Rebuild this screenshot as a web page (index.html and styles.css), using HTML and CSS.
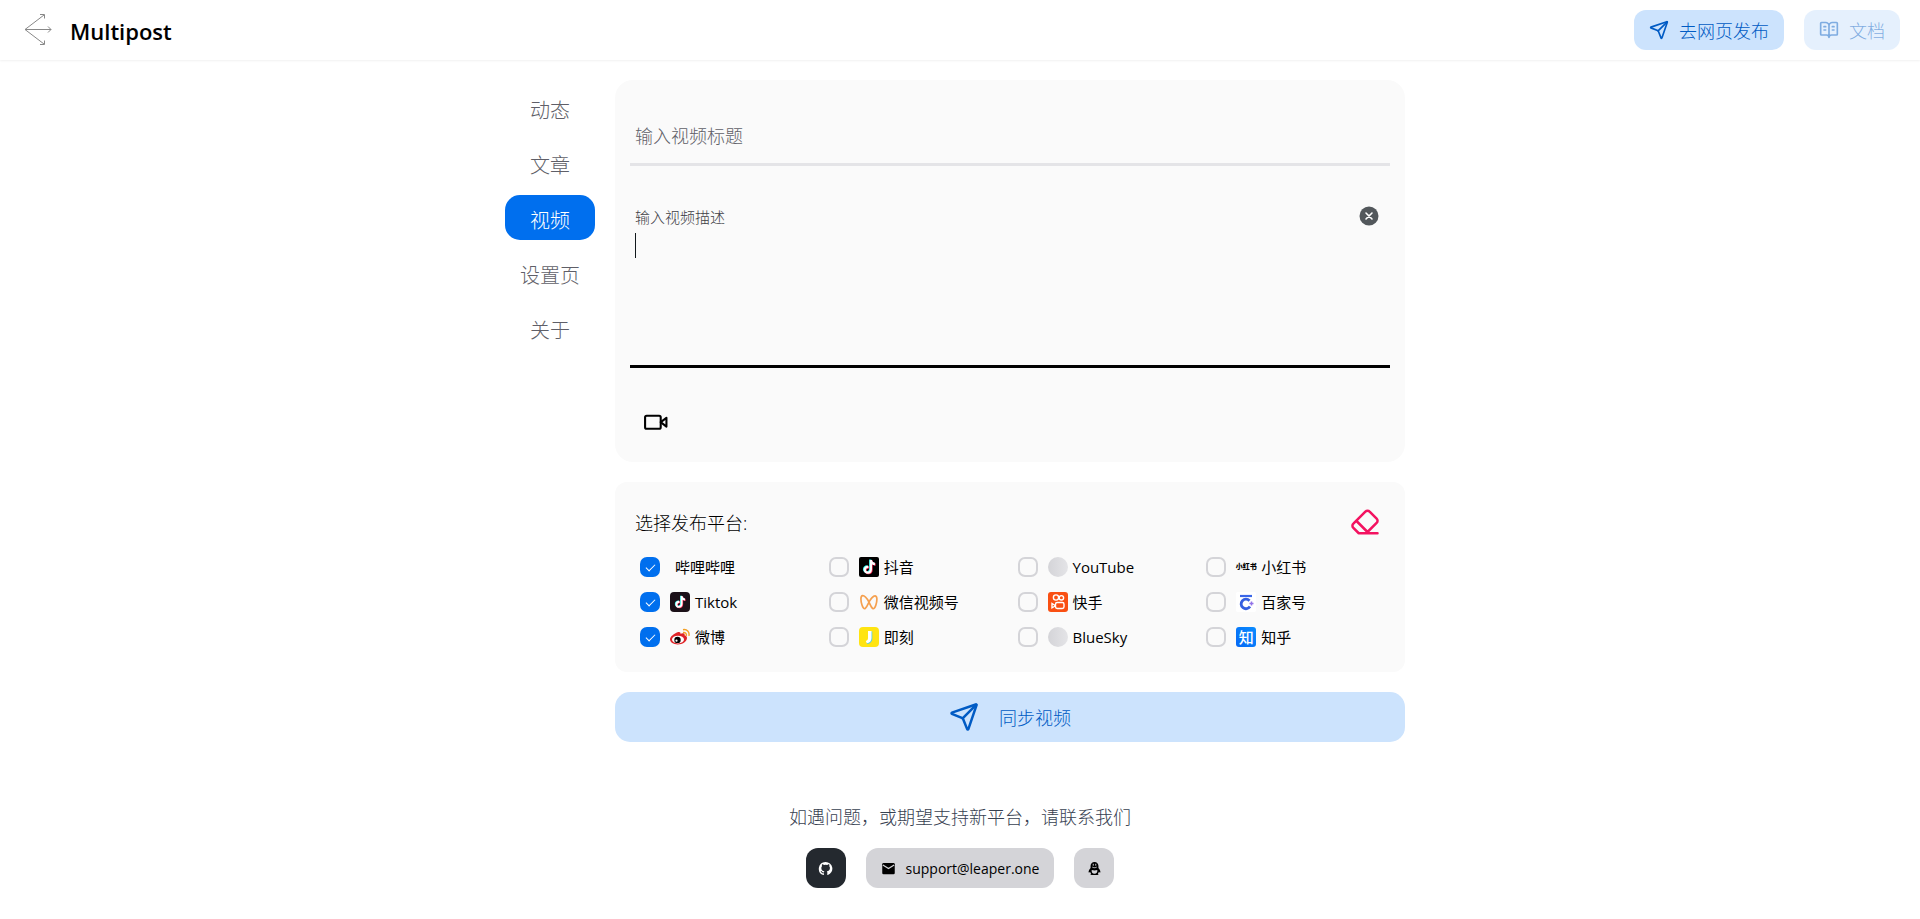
FILE: index.html
```html
<!DOCTYPE html>
<html lang="zh-CN">
<head>
    <meta charset="UTF-8">
    <meta name="viewport" content="width=device-width, initial-scale=1.0">
    <title>Multipost</title>
    <link rel="stylesheet" href="styles.css">
</head>
<body>
    <!-- Shared symbols -->
    <svg class="symbols" aria-hidden="true">
        <symbol id="icon-send" viewBox="0 0 24 24">
            <path d="M14.536 21.686a.5.5 0 0 0 .937-.024l6.5-19a.496.496 0 0 0-.635-.635l-19 6.5a.5.5 0 0 0-.024.937l7.93 3.18a2 2 0 0 1 1.112 1.11z"/>
            <path d="m21.854 2.147-10.94 10.939"/>
        </symbol>
        <symbol id="icon-note" viewBox="0 0 20 20">
            <path d="M10.800 3h2.200c.2 1.700 1.300 2.700 2.900 2.800v2.400c-1.100 0-2.100-.3-2.900-.9v4.900c0 2.900-1.800 4.600-4.200 4.600s-4.200-1.700-4.200-4c0-2.600 2-4.400 4.700-4.100v2.400c-1.300-.3-2.400.5-2.400 1.700 0 1.100.8 1.800 1.800 1.800 1.200 0 2.100-.8 2.100-2.300z"/>
        </symbol>
    </svg>

    <header class="header">
        <div class="brand">
            <svg class="logo" viewBox="0 0 32 34" aria-hidden="true">
                <path d="M2 16.500 21 2M2 16.500h26M2 16.500 21 31M17 1.500h4.500v4M25 13.500l3 3-3 3M21.500 27.500v4H17"/>
            </svg>
            <h1>Multipost</h1>
        </div>
        <div class="header-actions">
            <button type="button" class="btn btn-primary">
                <svg class="icon" aria-hidden="true"><use href="#icon-send"/></svg>
                去网页发布
            </button>
            <button type="button" class="btn btn-primary" disabled>
                <svg class="icon" viewBox="0 0 24 24" aria-hidden="true">
                    <path d="M12 21V7M16 12h2M16 8h2M6 12h2M6 8h2M3 18a1 1 0 0 1-1-1V4a1 1 0 0 1 1-1h5a4 4 0 0 1 4 4 4 4 0 0 1 4-4h5a1 1 0 0 1 1 1v13a1 1 0 0 1-1 1h-6a3 3 0 0 0-3 3 3 3 0 0 0-3-3z"/>
                </svg>
                文档
            </button>
        </div>
    </header>

    <main class="container">
        <nav class="tabs">
            <button type="button" class="tab">动态</button>
            <button type="button" class="tab">文章</button>
            <button type="button" class="tab active">视频</button>
            <button type="button" class="tab">设置页</button>
            <button type="button" class="tab">关于</button>
        </nav>

        <div class="panel">
            <!-- Video form -->
            <section class="card editor">
                <input type="text" class="title-input" placeholder="输入视频标题" aria-label="输入视频标题">
                <div class="field">
                    <div class="field-head">
                        <label for="description">输入视频描述</label>
                        <button type="button" class="clear-btn" aria-label="清除">
                            <svg viewBox="0 0 20 20" aria-hidden="true">
                                <circle cx="10" cy="10" r="9.500" fill="#52575b"/>
                                <path d="m7 7 6 6M13 7l-6 6" stroke="#fff" stroke-width="1.600" stroke-linecap="round"/>
                            </svg>
                        </button>
                    </div>
                    <div class="field-body">
                        <textarea id="description"></textarea>
                        <span class="caret"></span>
                    </div>
                </div>
                <button type="button" class="video-btn" aria-label="添加视频">
                    <svg class="icon-video" viewBox="0 0 24 24" aria-hidden="true">
                        <rect x="2" y="5.500" width="15" height="12.500" rx="1.500"/>
                        <path d="m22.500 7.500-5.500 4.200 5.500 4.200z"/>
                    </svg>
                </button>
            </section>

            <!-- Platforms -->
            <section class="card platforms">
                <div class="platforms-head">
                    <h2>选择发布平台:</h2>
                    <button type="button" class="erase-btn" aria-label="清空">
                        <svg class="icon-lg" viewBox="0 0 24 24" aria-hidden="true">
                            <path d="m7 21-4.300-4.300c-1-1-1-2.500 0-3.400l9.600-9.600c1-1 2.500-1 3.400 0l5.600 5.600c1 1 1 2.500 0 3.400L13 21M22 21H7M5 11l9 9"/>
                        </svg>
                    </button>
                </div>
                <div class="platform-grid">
                    <label class="platform">
                        <input type="checkbox" checked>
                        <span class="platform-name indent">哔哩哔哩</span>
                    </label>
                    <label class="platform">
                        <input type="checkbox">
                        <span class="platform-name">
                            <svg viewBox="0 0 20 20" aria-hidden="true">
                                <rect width="20" height="20" rx="2"/>
                                <use href="#icon-note" x="-.7" y="-.5" fill="#25f4ee"/>
                                <use href="#icon-note" x=".7" y=".5" fill="#fe2c55"/>
                                <use href="#icon-note" fill="#fff"/>
                            </svg>
                            抖音
                        </span>
                    </label>
                    <label class="platform">
                        <input type="checkbox">
                        <span class="platform-name latin"><i class="avatar"></i>YouTube</span>
                    </label>
                    <label class="platform">
                        <input type="checkbox">
                        <span class="platform-name"><i class="red-note" aria-hidden="true">小红书</i>小红书</span>
                    </label>

                    <label class="platform">
                        <input type="checkbox" checked>
                        <span class="platform-name latin">
                            <svg viewBox="0 0 20 20" aria-hidden="true">
                                <rect width="20" height="20" rx="4" fill="#1b1018"/>
                                <g transform="translate(1.500 1.500) scale(.85)">
                                    <use href="#icon-note" x="-.7" y="-.5" fill="#25f4ee"/>
                                    <use href="#icon-note" x=".7" y=".5" fill="#fe2c55"/>
                                    <use href="#icon-note" fill="#fff"/>
                                </g>
                            </svg>
                            Tiktok
                        </span>
                    </label>
                    <label class="platform">
                        <input type="checkbox">
                        <span class="platform-name">
                            <svg viewBox="0 0 20 20" aria-hidden="true">
                                <path d="M10 10C8 6.500 5.500 3.500 3.600 3.700 1.200 4 1.700 9 3 13c.8 2.500 2 4.200 3.200 3.500C7.800 15.500 8.800 12.500 10 10c1.200-2.500 4.300-6.500 6.200-6.200 2.400.4 1.900 5.200.7 9.200-.8 2.500-2 4.200-3.200 3.500C12.200 15.500 11.200 12.500 10 10z" fill="none" stroke="#f5a04f" stroke-width="1.700"/>
                            </svg>
                            微信视频号
                        </span>
                    </label>
                    <label class="platform">
                        <input type="checkbox">
                        <span class="platform-name">
                            <svg viewBox="0 0 20 20" aria-hidden="true">
                                <rect width="20" height="20" rx="3" fill="#f94f12"/>
                                <g fill="none" stroke="#fff" stroke-width="1.400">
                                    <circle cx="8" cy="5.500" r="2.600"/>
                                    <circle cx="13.400" cy="5.800" r="2.200"/>
                                    <rect x="7.500" y="10.500" width="8.500" height="6" rx="1.700"/>
                                    <path d="m7.200 13.500-3.200-2v4.300l3.200-1.800"/>
                                </g>
                            </svg>
                            快手
                        </span>
                    </label>
                    <label class="platform">
                        <input type="checkbox">
                        <span class="platform-name">
                            <svg viewBox="0 0 20 20" aria-hidden="true">
                                <rect width="20" height="20" rx="2" fill="#fff"/>
                                <path d="M4 4h12" stroke="#3a66e8" stroke-width="2.200"/>
                                <path d="M13.500 8.700A4.800 4.800 0 1 0 14 14.500" fill="none" stroke="#355fe0" stroke-width="2.800"/>
                                <path d="M15.500 9.500v4M13.500 11.500h4" stroke="#9272e8" stroke-width="1.500"/>
                            </svg>
                            百家号
                        </span>
                    </label>

                    <label class="platform">
                        <input type="checkbox" checked>
                        <span class="platform-name">
                            <svg viewBox="0 0 20 20" aria-hidden="true">
                                <path d="M7.500 5.300c2-.9 3.300-.2 2.900 1.500 2.500-1.100 4.700-.7 4.200 1.400 1.700.6 2.600 1.600 2.400 3.100-.4 3.500-4.500 6.200-9.200 6.200C3.300 17.500 0 15.300 0 12.300 0 9.500 4.500 6.500 7.500 5.300z" fill="#df2428"/>
                                <ellipse cx="8" cy="12.600" rx="6" ry="3.900" fill="#fff"/>
                                <circle cx="7.500" cy="12.900" r="3.200"/>
                                <circle cx="6.500" cy="13.700" r="1.100" fill="#fff"/>
                                <path d="M13 5.500c2.400-.4 3.800 1 3.300 3.300M13 2.700c4-.8 6.800 2.200 5.900 6.200" fill="none" stroke="#f3a026" stroke-width="1.400"/>
                            </svg>
                            微博
                        </span>
                    </label>
                    <label class="platform">
                        <input type="checkbox">
                        <span class="platform-name">
                            <svg viewBox="0 0 20 20" aria-hidden="true">
                                <rect width="20" height="20" rx="4" fill="#ffe411"/>
                                <path d="M9.800 4.500h3.500v7c0 3.200-2.200 5.300-5 5.500l-1-2.500c1.700-.3 2.500-1.300 2.500-3z" fill="#53cfe5"/>
                                <path d="M9 4h3.500v7c0 3-2 5-4.700 5.300l-1-2.300C8.300 13.500 9 12.500 9 11z" fill="#fff"/>
                            </svg>
                            即刻
                        </span>
                    </label>
                    <label class="platform">
                        <input type="checkbox">
                        <span class="platform-name latin"><i class="avatar"></i>BlueSky</span>
                    </label>
                    <label class="platform">
                        <input type="checkbox">
                        <span class="platform-name"><i class="zhihu" aria-hidden="true">知</i>知乎</span>
                    </label>
                </div>
            </section>

            <button type="button" class="btn btn-primary btn-sync">
                <svg class="icon-lg" aria-hidden="true"><use href="#icon-send"/></svg>
                同步视频
            </button>
        </div>
    </main>

    <footer class="footer">
        <p>如遇问题，或期望支持新平台，请联系我们</p>
        <div class="contacts">
            <a href="#" class="contact contact-dark" aria-label="GitHub">
                <svg viewBox="0 0 24 24" aria-hidden="true">
                    <path d="M12 1.500a10.800 10.800 0 0 0-3.400 21c.6.100.8-.2.800-.5v-2.500c-3 .6-3.700-1.300-3.700-1.300-.5-1.200-1.200-1.600-1.200-1.600-1-.7.100-.7.100-.7 1.100.1 1.700 1.100 1.700 1.100 1 1.700 2.600 1.200 3.200.9.100-.7.400-1.200.7-1.500-2.400-.3-4.900-1.200-4.900-5.300 0-1.200.4-2.100 1.100-2.900-.1-.3-.5-1.400.1-2.800 0 0 .9-.3 3 1.100a10 10 0 0 1 5.400 0c2.100-1.400 3-1.100 3-1.100.6 1.400.2 2.500.1 2.800.7.800 1.100 1.700 1.100 2.900 0 4.100-2.500 5-4.900 5.300.4.300.7 1 .7 2V22c0 .3.200.6.800.5A10.800 10.800 0 0 0 12 1.500z" fill="#fff"/>
                </svg>
            </a>
            <a href="mailto:support@leaper.one" class="contact">
                <svg viewBox="0 0 24 24" aria-hidden="true">
                    <rect x="2" y="3" width="20" height="18" rx="2"/>
                    <path d="m3 6.500 9 5.500 9-5.500" fill="none" stroke="#d4d4d8" stroke-width="2"/>
                </svg>
                support@leaper.one
            </a>
            <a href="#" class="contact" aria-label="QQ">
                <svg viewBox="0 0 24 24" aria-hidden="true">
                    <path d="M12 1.500c-4 0-6.300 3-6.300 6.500v3C4 13 2.200 15.500 2.600 18c.2 1 1.300.4 2.300-1 .3 1.300.9 2.300 1.700 3-1.200.6-1.700 2.500 1 2.500h8.800c2.700 0 2.200-1.900 1-2.500.8-.7 1.400-1.700 1.700-3 1 1.400 2.100 2 2.300 1 .4-2.500-1.400-5-3.100-7V8c0-3.500-2.300-6.500-6.300-6.500z"/>
                    <path d="M7.500 14.500c3 1 6 1 9 0 .5 3.500-1.200 6-4.500 6s-5-2.500-4.500-6z" fill="#d4d4d8"/>
                    <path d="M8.500 9.800c2.300 1.200 4.700 1.200 7 0M10 4.500v3M14 4.500v3" fill="none" stroke="#d4d4d8" stroke-width="1.500"/>
                </svg>
            </a>
        </div>
    </footer>
</body>
</html>
```

FILE: styles.css
```css
/* General Styles */
* {
    box-sizing: border-box;
}

body {
    margin: 0;
    min-height: 100vh;
    background: #fff;
    color: #11181c;
    font-family: "Open Sans", "Noto Sans CJK SC", sans-serif;
    font-size: 18px;
    font-weight: 300;
}

button,
input,
textarea {
    margin: 0;
    font: inherit;
    color: inherit;
}

button {
    padding: 0;
    border: none;
    background: none;
    cursor: pointer;
}

svg {
    display: block;
    flex: none;
}

.symbols {
    display: none;
}

/* Header */
.header {
    display: flex;
    align-items: center;
    justify-content: space-between;
    height: 60px;
    padding: 0 20px;
    box-shadow: 0 1px 2px rgba(0, 0, 0, 0.06);
}

.brand {
    display: flex;
    align-items: center;
    gap: 15px;
}

.logo {
    width: 32px;
    height: 34px;
    margin-left: 3px;
    fill: none;
    stroke: #888;
    stroke-width: 1;
}

.brand h1 {
    margin: 0;
    padding-top: 2px;
    color: #000;
    font-size: 22px;
    font-weight: 600;
}

.header-actions {
    display: flex;
    gap: 20px;
}

/* Buttons */
.btn {
    display: flex;
    align-items: center;
    justify-content: center;
    gap: 10px;
    height: 40px;
    padding: 0 15px;
    border-radius: 12px;
    white-space: nowrap;
}

.btn-primary {
    background: #cce3fd;
    color: #005bc4;
}

.btn:disabled {
    opacity: 0.5;
    cursor: default;
}

.icon,
.icon-lg,
.icon-video {
    width: 20px;
    height: 20px;
    fill: none;
    stroke: currentColor;
    stroke-width: 2;
    stroke-linecap: round;
    stroke-linejoin: round;
}

.icon-lg {
    width: 30px;
    height: 30px;
}

.icon-video {
    width: 25px;
    height: 25px;
}

/* Layout */
.container {
    display: flex;
    max-width: 920px;
    margin: 0 auto;
}

.tabs {
    display: flex;
    flex-direction: column;
    gap: 10px;
    width: 100px;
    padding: 25px 5px;
}

.tab {
    height: 45px;
    padding-top: 4px;
    border-radius: 15px;
    color: #5f5f68;
    font-size: 20px;
}

.tab.active {
    background: #006fee;
    color: #fff;
}

.panel {
    flex: 1;
    display: flex;
    flex-direction: column;
    gap: 20px;
    min-width: 0;
    padding: 20px 15px;
}

.card {
    background: #fafafa;
    padding: 15px;
}

/* Editor */
.editor {
    border-radius: 18px;
}

.title-input {
    display: block;
    width: 100%;
    height: 71px;
    padding: 14px 5px 0;
    border: none;
    border-bottom: 3px solid #e4e4e7;
    background: none;
    outline: none;
}

.title-input::placeholder {
    color: #5f5f68;
    opacity: 1;
}

.field {
    margin-top: 35px;
    border-bottom: 3px solid #000;
}

.field-head {
    display: flex;
    align-items: center;
    justify-content: space-between;
    height: 30px;
    padding: 0 11px 0 5px;
    color: #3f3f46;
    font-size: 15px;
}

.clear-btn svg {
    width: 20px;
    height: 20px;
}

.field-body {
    position: relative;
}

.field textarea {
    display: block;
    width: 100%;
    height: 134px;
    padding: 0 5px;
    border: none;
    background: none;
    outline: none;
    resize: none;
    line-height: 28px;
}

.caret {
    position: absolute;
    top: 2px;
    left: 5px;
    width: 1px;
    height: 25px;
    background: #11181c;
}

.video-btn {
    display: flex;
    align-items: center;
    justify-content: center;
    width: 50px;
    height: 50px;
    margin-top: 29px;
    color: #000;
}

/* Platforms */
.platforms {
    padding: 20px;
    border-radius: 12px;
}

.platforms-head {
    display: flex;
    align-items: center;
    justify-content: space-between;
    height: 40px;
    padding-right: 5px;
}

.platforms-head h2 {
    margin: 0;
    font-size: 18px;
    font-weight: 300;
    color: #000;
}

.erase-btn {
    color: #f31260;
}

.platform-grid {
    display: grid;
    grid-template-columns: repeat(4, 1fr);
    gap: 5px;
    padding: 10px 0 0;
}

.platform {
    display: flex;
    align-items: center;
    gap: 10px;
    height: 30px;
    padding: 0 5px;
    cursor: pointer;
}

.platform input {
    appearance: none;
    display: grid;
    place-content: center;
    width: 20px;
    height: 20px;
    border: 2px solid #d4d4d8;
    border-radius: 7px;
}

.platform input:checked {
    border-color: #006fee;
    background: #006fee;
}

.platform input:checked::after {
    content: "";
    width: 8px;
    height: 4px;
    border: solid #fff;
    border-width: 0 0 1px 1px;
    transform: translateY(-1px) rotate(-45deg);
}

.platform-name {
    display: flex;
    align-items: center;
    gap: 5px;
    color: #000;
    font-size: 15px;
    font-weight: 400;
    line-height: 20px;
    white-space: nowrap;
}

.platform-name.latin {
    font-weight: 500;
}

.platform-name.indent {
    padding-left: 5px;
}

.platform-name svg {
    width: 20px;
    height: 20px;
}

.avatar {
    width: 20px;
    height: 20px;
    border-radius: 50%;
    background: linear-gradient(90deg, #d4d4d8, #e4e4e7);
}

.red-note,
.zhihu {
    display: flex;
    align-items: center;
    justify-content: center;
    width: 20px;
    height: 20px;
    font-style: normal;
}

.red-note {
    font-size: 7px;
    font-weight: 900;
}

.zhihu {
    border-radius: 3px;
    background: linear-gradient(45deg, #0568f5, #0a8cff);
    color: #fff;
    font-size: 15px;
    font-weight: 500;
}

.btn-sync {
    gap: 20px;
    height: 50px;
    border-radius: 15px;
}

/* Footer */
.footer {
    display: flex;
    flex-direction: column;
    align-items: center;
    gap: 16px;
    padding: 40px 20px 30px;
}

.footer p {
    margin: 0;
    color: #374151;
    line-height: 30px;
}

.contacts {
    display: flex;
    gap: 20px;
}

.contact {
    display: flex;
    align-items: center;
    justify-content: center;
    gap: 10px;
    min-width: 40px;
    height: 40px;
    padding: 0 12px;
    border-radius: 12px;
    background: #d4d4d8;
    color: #000;
    font-size: 14px;
    font-weight: 400;
    text-decoration: none;
}

.contact[href^="mailto"] {
    padding: 0 15px;
}

.contact svg {
    width: 15px;
    height: 15px;
}

.contact-dark {
    background: #24292f;
}
```
